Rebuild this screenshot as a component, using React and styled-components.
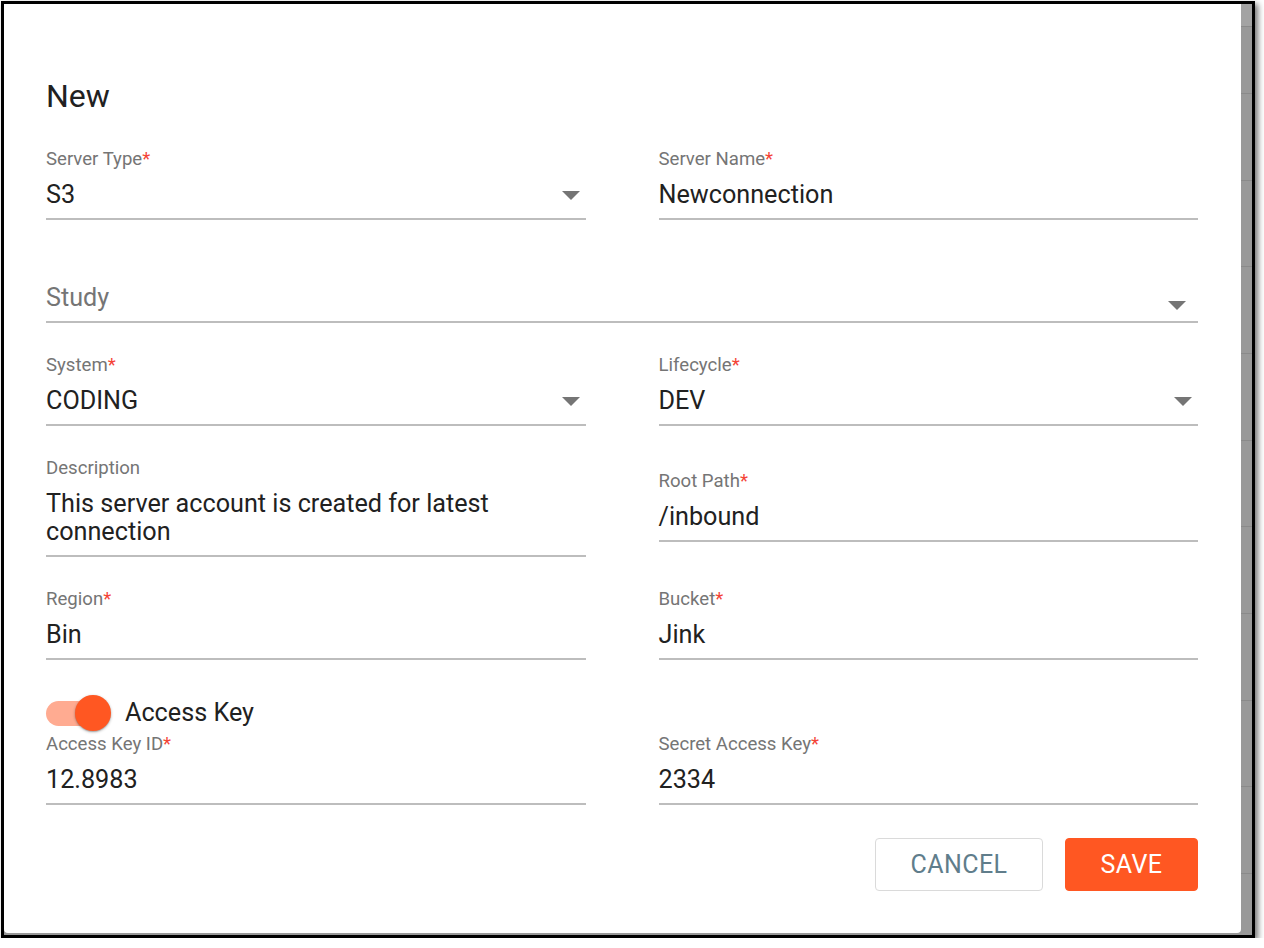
import React from 'react';
import styled, { createGlobalStyle } from 'styled-components';

const GlobalStyle = createGlobalStyle`
  html, body {
    margin: 0;
    padding: 0;
    background: #ffffff;
  }
  body {
    font-family: 'Roboto', 'Liberation Sans', sans-serif;
    -webkit-font-smoothing: antialiased;
  }
`;

const Frame = styled.div`
  box-sizing: border-box;
  width: 1254px;
  height: 937px;
  margin: 1px 0 0 1px;
  border: 3px solid #000;
  box-shadow: 3px 3px 6px rgba(0, 0, 0, 0.55);
  background: #999999;
  display: flex;
  overflow: hidden;
`;

const Dialog = styled.div`
  box-sizing: border-box;
  flex: none;
  width: 1237px;
  height: 929px;
  background: #fff;
  border-radius: 0 0 4px 4px;
  padding: 75px 43px 0 42px;
`;

const Backdrop = styled.div`
  flex: 1;
  display: flex;
  flex-direction: column;
`;

const BackdropRow = styled.div`
  flex: none;
  height: ${(p) => p.$h}px;
  background: ${(p) => (p.$head ? '#a3a3a3' : '#999999')};
  border-bottom: 1px solid #8a8a8a;
`;

const Title = styled.h2`
  margin: 0 0 35px;
  font-size: 32px;
  line-height: 35px;
  font-weight: 400;
  color: #212121;
`;

const Grid = styled.div`
  display: grid;
  grid-template-columns: 1fr 1fr;
  column-gap: 73px;
  row-gap: 32px;
  align-items: start;
`;

const FieldWrap = styled.div`
  display: flex;
  flex-direction: column;
  grid-column: ${(p) => (p.$wide ? '1 / -1' : 'auto')};
  margin-top: ${(p) => p.$offset || 0}px;
`;

const Label = styled.label`
  height: 21px;
  margin-bottom: 11px;
  font-size: 18.6px;
  line-height: 21px;
  color: #757575;
  white-space: nowrap;
`;

const Star = styled.span`
  color: #f44336;
`;

const InputBox = styled.div`
  position: relative;
  padding-bottom: 9px;
  border-bottom: 2px solid #bdbdbd;
`;

const Value = styled.div`
  font-size: 25.2px;
  line-height: 28px;
  color: ${(p) => (p.$placeholder ? '#757575' : '#212121')};
  padding-right: ${(p) => (p.$select ? '40px' : '0')};
`;

const Arrow = styled.svg`
  position: absolute;
  right: ${(p) => p.$right}px;
  top: ${(p) => p.$top}px;
  width: 18px;
  height: 9px;
`;

const SwitchRow = styled.div`
  display: flex;
  align-items: center;
  height: 42px;
  margin-top: 32px;
`;

const SwitchBox = styled.div`
  position: relative;
  width: 65px;
  height: 36px;
  display: flex;
  align-items: center;
`;

const Track = styled.div`
  width: 62px;
  height: 25px;
  border-radius: 13px;
  background: #ffab91;
`;

const Thumb = styled.div`
  position: absolute;
  right: 0;
  top: 0;
  width: 36px;
  height: 36px;
  border-radius: 50%;
  background: #ff5722;
  box-shadow: 0 1px 3px rgba(0, 0, 0, 0.3), 0 1px 1px rgba(0, 0, 0, 0.14);
`;

const SwitchLabel = styled.span`
  margin-left: 14px;
  font-size: 25.2px;
  line-height: 28px;
  color: #212121;
`;

const Actions = styled.div`
  display: flex;
  justify-content: flex-end;
  gap: 22px;
  margin-top: 33px;
`;

const Button = styled.button`
  box-sizing: border-box;
  width: ${(p) => (p.$primary ? 133 : 168)}px;
  height: 53px;
  padding: 0;
  border-radius: 4px;
  font-family: 'Roboto', 'Liberation Sans', sans-serif;
  font-size: 25px;
  font-weight: 400;
  letter-spacing: 0.4px;
  text-transform: uppercase;
  cursor: pointer;
  border: 1px solid ${(p) => (p.$primary ? '#ff5722' : '#dadada')};
  background: ${(p) => (p.$primary ? '#ff5722' : '#ffffff')};
  color: ${(p) => (p.$primary ? '#ffffff' : '#607d8b')};
`;

const DropArrow = ({ right = 6, top = 10 }) => (
  <Arrow $right={right} $top={top} viewBox="0 0 18 9">
    <path d="M0 0 L9 9 L18 0 Z" fill="#757575" />
  </Arrow>
);

const Field = ({ label, required, value, placeholder, select, wide, offset, arrowRight, arrowTop }) => (
  <FieldWrap $wide={wide} $offset={offset}>
    <Label>
      {label}
      {required && <Star>*</Star>}
    </Label>
    <InputBox>
      <Value $placeholder={!!placeholder} $select={select}>
        {value || placeholder}
      </Value>
      {select && <DropArrow right={arrowRight} top={arrowTop} />}
    </InputBox>
  </FieldWrap>
);

const backdropRows = [
  { h: 22, head: true },
  { h: 66 },
  { h: 86 },
  { h: 85 },
  { h: 86 },
  { h: 86 },
  { h: 85 },
  { h: 86 },
  { h: 86 },
  { h: 85 },
  { h: 86 },
  { h: 86 },
];

export default function App() {
  return (
    <>
      <GlobalStyle />
      <Frame>
        <Dialog>
          <Title>New</Title>
          <Grid>
            <Field label="Server Type" required value="S3" select />
            <Field label="Server Name" required value="Newconnection" />
            <Field wide placeholder="Study" select arrowRight={12} arrowTop={17} />
            <Field label="System" required value="CODING" select />
            <Field label="Lifecycle" required value="DEV" select />
            <Field label="Description" value="This server account is created for latest connection" />
            <Field label="Root Path" required value="/inbound" offset={13} />
            <Field label="Region" required value="Bin" />
            <Field label="Bucket" required value="Jink" />
          </Grid>
          <SwitchRow>
            <SwitchBox>
              <Track />
              <Thumb />
            </SwitchBox>
            <SwitchLabel>Access Key</SwitchLabel>
          </SwitchRow>
          <Grid>
            <Field label="Access Key ID" required value="12.8983" />
            <Field label="Secret Access Key" required value="2334" />
          </Grid>
          <Actions>
            <Button>Cancel</Button>
            <Button $primary>Save</Button>
          </Actions>
        </Dialog>
        <Backdrop>
          {backdropRows.map((r, i) => (
            <BackdropRow key={i} $h={r.h} $head={r.head} />
          ))}
        </Backdrop>
      </Frame>
    </>
  );
}
